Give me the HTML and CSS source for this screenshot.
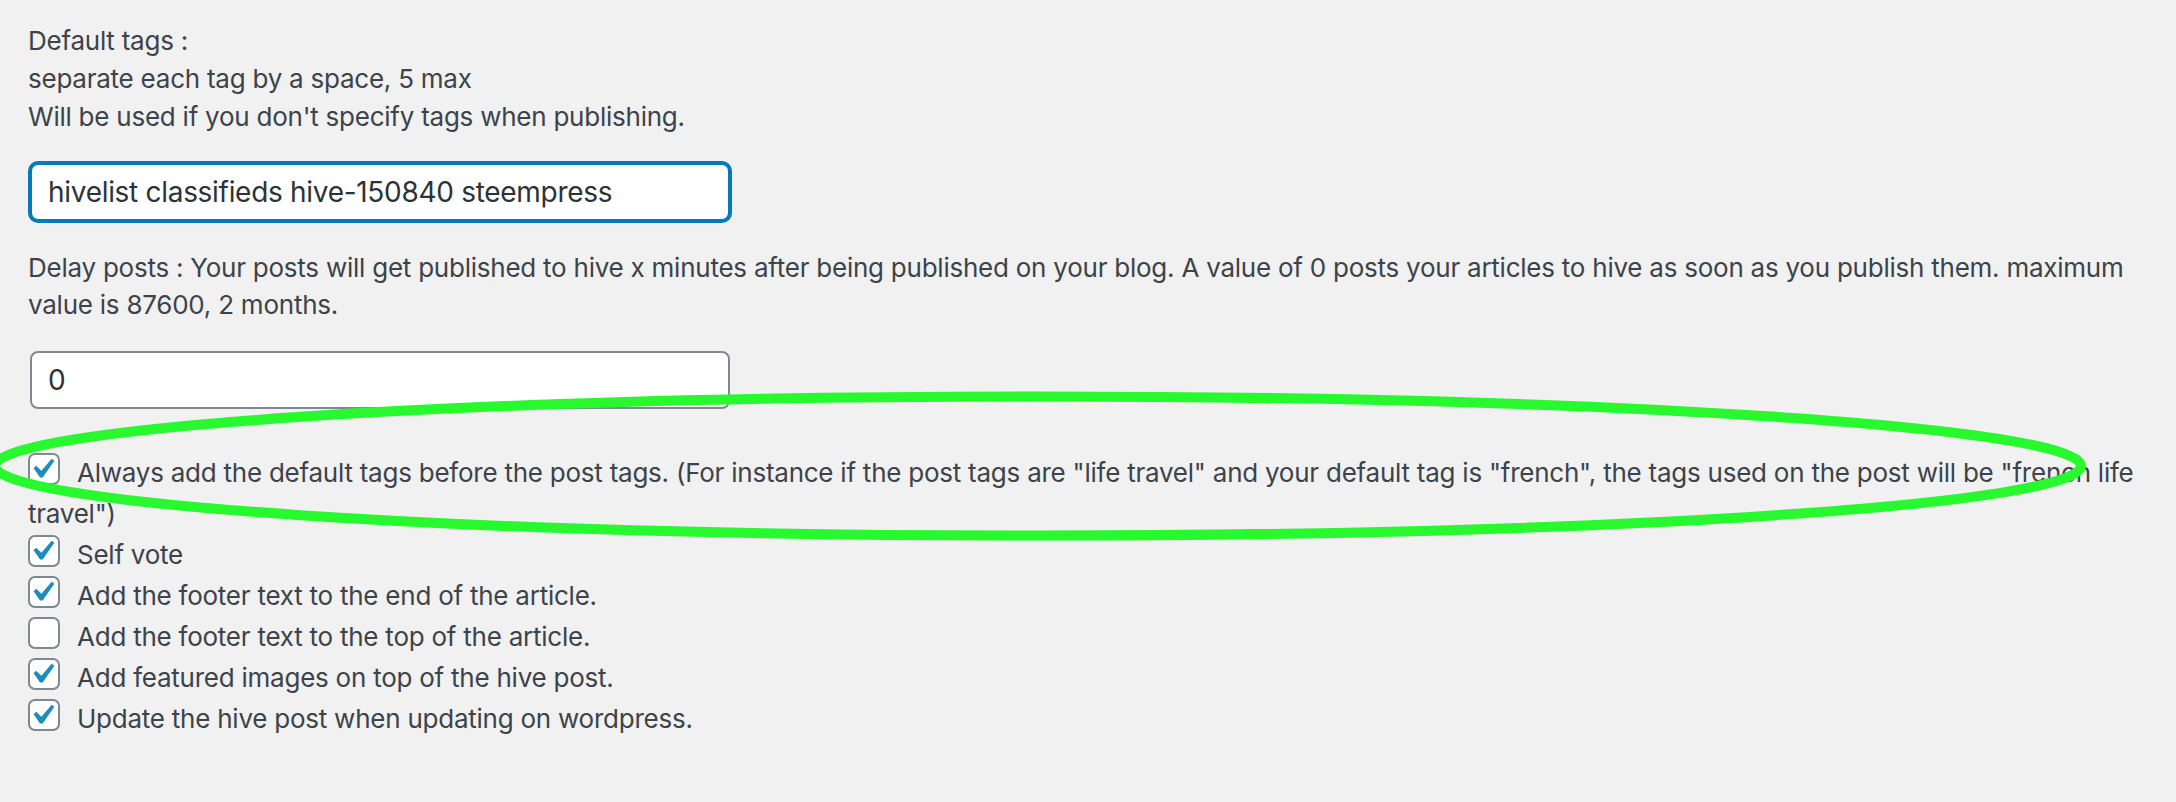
FILE: index.html
```html
<!DOCTYPE html>
<html lang="en">
<head>
  <meta charset="UTF-8" />
  <meta name="viewport" content="width=device-width, initial-scale=1.0" />
  <title>Hive settings</title>
  <link rel="stylesheet" href="styles.css">
</head>
<body>

  <div class="settings">
    <p class="desc desc-tags">Default tags :<br>separate each tag by a space, 5 max<br>Will be used if you don't specify tags when publishing.</p>
    <input type="text" class="text-field focused" value="hivelist classifieds hive-150840 steempress" />

    <p class="desc desc-delay">Delay posts : Your posts will get published to hive x minutes after being published on your blog. A value of 0 posts your articles to hive as soon as you publish them. maximum value is 87600, 2 months.</p>
    <input type="text" class="text-field" value="0" />

    <div class="options">
      <label class="option"><span class="check on"><svg viewBox="0 0 20 20"><path d="M14.83 4.89l1.34.94-5.81 8.38H9.02L5.78 9.67l1.34-1.25 2.57 2.4z"/></svg></span>Always add the default tags before the post tags. (For instance if the post tags are "life travel" and your default tag is "french", the tags used on the post will be "french life travel")</label>
      <label class="option"><span class="check on"><svg viewBox="0 0 20 20"><path d="M14.83 4.89l1.34.94-5.81 8.38H9.02L5.78 9.67l1.34-1.25 2.57 2.4z"/></svg></span>Self vote</label>
      <label class="option"><span class="check on"><svg viewBox="0 0 20 20"><path d="M14.83 4.89l1.34.94-5.81 8.38H9.02L5.78 9.67l1.34-1.25 2.57 2.4z"/></svg></span>Add the footer text to the end of the article.</label>
      <label class="option"><span class="check"></span>Add the footer text to the top of the article.</label>
      <label class="option"><span class="check on"><svg viewBox="0 0 20 20"><path d="M14.83 4.89l1.34.94-5.81 8.38H9.02L5.78 9.67l1.34-1.25 2.57 2.4z"/></svg></span>Add featured images on top of the hive post.</label>
      <label class="option"><span class="check on"><svg viewBox="0 0 20 20"><path d="M14.83 4.89l1.34.94-5.81 8.38H9.02L5.78 9.67l1.34-1.25 2.57 2.4z"/></svg></span>Update the hive post when updating on wordpress.</label>
    </div>
  </div>

  <!-- marker drawn over the screenshot -->
  <svg class="annotation" width="2176" height="802" viewBox="0 0 2176 802">
    <ellipse cx="1038" cy="466" rx="1043" ry="69.5" />
  </svg>

</body>
</html>
```

FILE: styles.css
```css
body {
  margin: 0;
  background: #f1f1f1;
  color: #3c434a;
  font-family: Inter, "Noto Sans", sans-serif;
  font-size: 26px;
  letter-spacing: -0.24px;
}
.settings {
  padding: 22px 10px 40px 28px;
}
.desc {
  margin: 0;
  line-height: 37px;
}
.desc-tags {
  line-height: 38px;
}
.desc-delay {
  margin-top: 28px;
}
.text-field {
  display: block;
  box-sizing: border-box;
  width: 700px;
  height: 58px;
  margin: 27px 2px 0;
  padding: 0 16px;
  font-family: Inter, "Noto Sans", sans-serif;
  font-size: 28px;
  letter-spacing: -0.3px;
  color: #2c3338;
  background: #fff;
  border: 2px solid #7e8993;
  border-radius: 8px;
  outline: none;
}
.text-field.focused {
  border-color: #007cba;
  box-shadow: 0 0 0 2px #007cba;
}
.desc-delay + .text-field {
  margin-top: 28px;
}
.options {
  margin-top: 43px;
  line-height: 41px;
}
.option {
  display: block;
}
.check {
  display: inline-block;
  position: relative;
  box-sizing: border-box;
  width: 32px;
  height: 32px;
  margin: 1px 17px 0 0;
  vertical-align: top;
  background: #fff;
  border: 2px solid #7e8993;
  border-radius: 7px;
}
.check svg {
  position: absolute;
  left: -8px;
  top: -6px;
  width: 40px;
  height: 40px;
  fill: #1e8cbe;
}
.annotation {
  position: absolute;
  left: 0;
  top: 0;
  pointer-events: none;
}
.annotation ellipse {
  fill: none;
  stroke: #27f92e;
  stroke-width: 10;
}
```
